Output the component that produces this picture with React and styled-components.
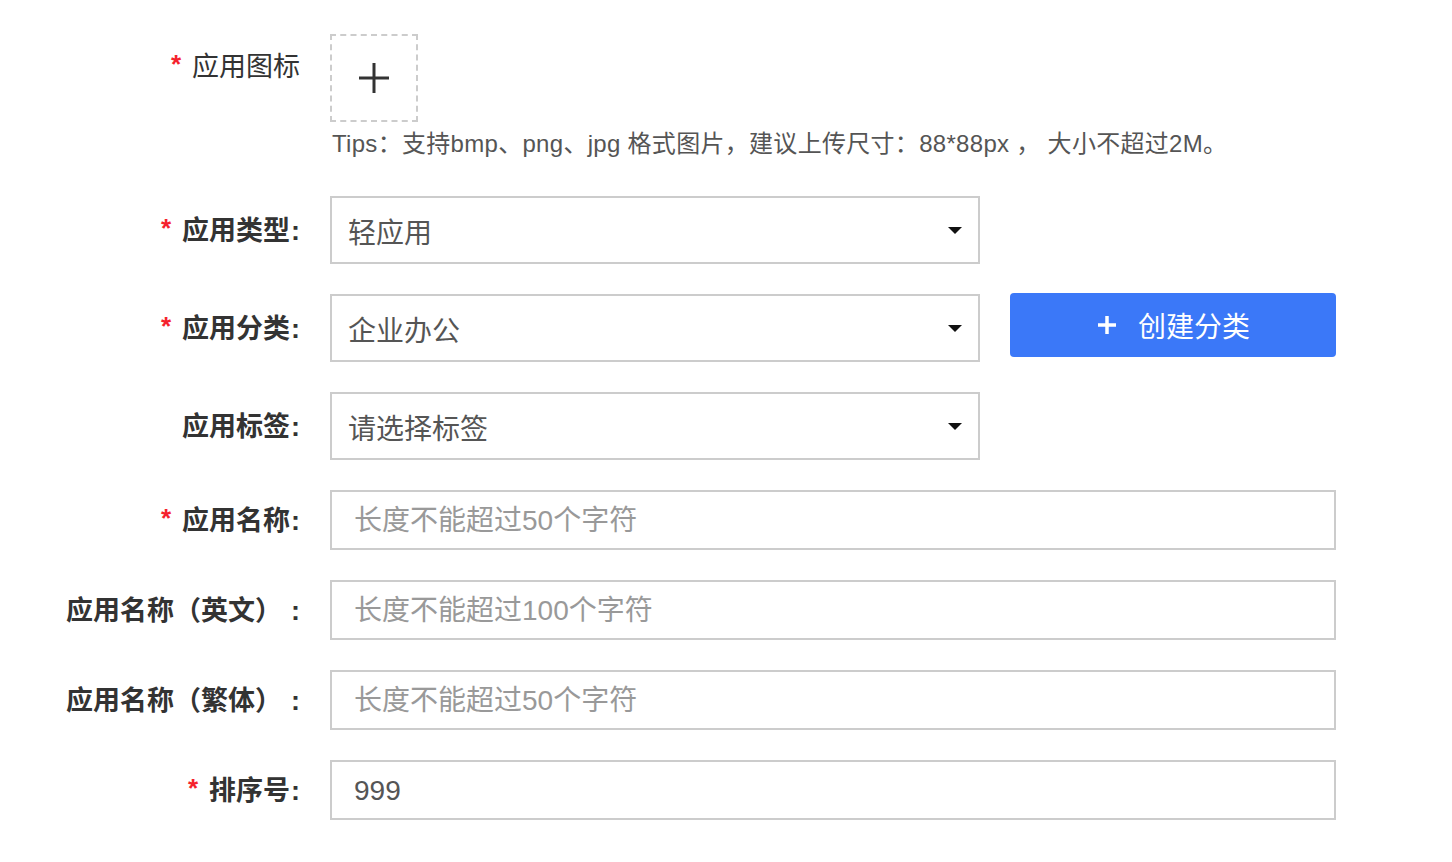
import React from "react";
import styled, { createGlobalStyle } from "styled-components";

const Global = createGlobalStyle`
  html, body { margin: 0; padding: 0; background: #fff; }
  body { font-family: "Liberation Sans", "Noto Sans CJK SC", sans-serif; color: #333; }
`;

const Form = styled.div`
  display: grid;
  grid-template-columns: 300px 1006px;
  column-gap: 30px;
  row-gap: 30px;
  padding-top: 34px;
`;

const Label = styled.div`
  display: flex;
  justify-content: flex-end;
  align-items: ${(p) => (p.$top ? "flex-start" : "center")};
  padding-top: ${(p) => (p.$top ? "14px" : "2px")};
  font-size: 27px;
  line-height: 38px;
  font-weight: ${(p) => (p.$light ? 400 : 600)};
  color: #333;
  white-space: nowrap;
`;

const Colon = styled.span`
  margin-left: ${(p) => (p.$wide ? "9px" : "1px")};
`;

const Star = styled.span`
  color: #f5222d;
  font-size: 26px;
  font-weight: 700;
  margin-right: 11px;
  position: relative;
  top: -3px;
`;

const Control = styled.div`
  display: flex;
  flex-direction: ${(p) => (p.$column ? "column" : "row")};
  align-items: flex-start;
`;

const Upload = styled.div`
  width: 88px;
  height: 88px;
  box-sizing: border-box;
  border: 2px dashed #ccc;
  display: flex;
  align-items: center;
  justify-content: center;
`;

const Tips = styled.div`
  margin-top: 6px;
  margin-bottom: 6px;
  margin-left: 2px;
  font-size: 24px;
  line-height: 32px;
  letter-spacing: 0.3px;
  color: #555;
  white-space: nowrap;
`;

const SelectBox = styled.div`
  width: 650px;
  height: 68px;
  box-sizing: border-box;
  border: 2px solid #ccc;
  display: flex;
  align-items: center;
  justify-content: space-between;
  padding: 2px 16px 0 16px;
  font-size: 28px;
  color: #555;
`;

const Caret = styled.span`
  width: 0;
  height: 0;
  margin-bottom: 2px;
  border-left: 7px solid transparent;
  border-right: 7px solid transparent;
  border-top: 7px solid #111;
`;

const Button = styled.button`
  margin-left: 30px;
  margin-top: -1px;
  width: 326px;
  height: 64px;
  border: none;
  border-radius: 4px;
  background: #3b78f8;
  color: #fff;
  font-family: inherit;
  font-size: 28px;
  display: flex;
  align-items: center;
  justify-content: center;
  gap: 22px;
  padding: 0 0 0 2px;
`;

const Input = styled.input`
  width: 1006px;
  height: 60px;
  box-sizing: border-box;
  border: 2px solid #ccc;
  padding: 2px 22px 0;
  font-family: inherit;
  font-size: 28px;
  color: #555;
  outline: none;
  &::placeholder { color: #999; }
`;

const PlusIcon = ({ size, stroke, color }) => (
  <svg width={size} height={size} viewBox={`0 0 ${size} ${size}`}>
    <line x1={size / 2} y1="0" x2={size / 2} y2={size} stroke={color} strokeWidth={stroke} />
    <line x1="0" y1={size / 2} x2={size} y2={size / 2} stroke={color} strokeWidth={stroke} />
  </svg>
);

const Field = ({ label, required, top, light, children, column, colon, wideColon }) => (
  <>
    <Label $top={top} $light={light}>
      {required && <Star>*</Star>}
      {label}
      {colon && <Colon $wide={wideColon}>:</Colon>}
    </Label>
    <Control $column={column}>{children}</Control>
  </>
);

export default function App() {
  return (
    <>
      <Global />
      <Form>
        <Field label="应用图标" required top light column>
          <Upload>
            <PlusIcon size={30} stroke={3} color="#333" />
          </Upload>
          <Tips>Tips：支持bmp、png、jpg 格式图片，建议上传尺寸：88*88px ， 大小不超过2M。</Tips>
        </Field>
        <Field label="应用类型" colon required>
          <SelectBox>
            轻应用
            <Caret />
          </SelectBox>
        </Field>
        <Field label="应用分类" colon required>
          <SelectBox>
            企业办公
            <Caret />
          </SelectBox>
          <Button>
            <PlusIcon size={18} stroke={3.5} color="#fff" />
            创建分类
          </Button>
        </Field>
        <Field label="应用标签" colon>
          <SelectBox>
            请选择标签
            <Caret />
          </SelectBox>
        </Field>
        <Field label="应用名称" colon required>
          <Input placeholder="长度不能超过50个字符" />
        </Field>
        <Field label="应用名称（英文）" colon wideColon>
          <Input placeholder="长度不能超过100个字符" />
        </Field>
        <Field label="应用名称（繁体）" colon wideColon>
          <Input placeholder="长度不能超过50个字符" />
        </Field>
        <Field label="排序号" colon required>
          <Input defaultValue="999" />
        </Field>
      </Form>
    </>
  );
}
